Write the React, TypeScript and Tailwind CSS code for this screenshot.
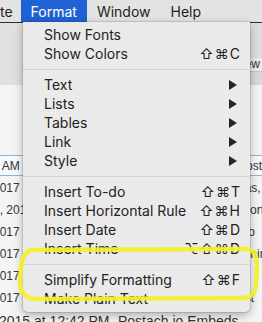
type Item =
  | { kind: "sep" }
  | { kind: "item"; label: string; shortcut?: string; sub?: boolean };

const menuItems: Item[] = [
  { kind: "item", label: "Show Fonts" },
  { kind: "item", label: "Show Colors", shortcut: "⇧⌘C" },
  { kind: "sep" },
  { kind: "item", label: "Text", sub: true },
  { kind: "item", label: "Lists", sub: true },
  { kind: "item", label: "Tables", sub: true },
  { kind: "item", label: "Link", sub: true },
  { kind: "item", label: "Style", sub: true },
  { kind: "sep" },
  { kind: "item", label: "Insert To-do", shortcut: "⇧⌘T" },
  { kind: "item", label: "Insert Horizontal Rule", shortcut: "⇧⌘H" },
  { kind: "item", label: "Insert Date", shortcut: "⇧⌘D" },
  { kind: "item", label: "Insert Time", shortcut: "⌥⇧⌘D" },
  { kind: "sep" },
  { kind: "item", label: "Simplify Formatting", shortcut: "⇧⌘F" },
  { kind: "item", label: "Make Plain Text" },
];

const listRows = [
  { date: "2017 at 4:18 PM", dateClass: "ml-[-7px]", title: "Ideas, drafts", titleClass: "ml-[-13px]" },
  { date: "Mar 2, 2017 at 9:02 AM", dateClass: "ml-[-31px]", title: "Report", titleClass: "ml-[-13px]" },
  { date: "2017 at 11:40 AM", dateClass: "ml-[-7px]", title: "Todo", titleClass: "ml-[-12px]" },
  { date: "2017 at 3:27 PM", dateClass: "ml-[-7px]", title: "Things", titleClass: "ml-[2px]" },
  { date: "2017 at 8:15 AM", dateClass: "ml-[-7px]", title: "", titleClass: "" },
  { date: "2017 at 5:51 PM", dateClass: "ml-[-7px]", title: "Test", titleClass: "ml-[-9px]" },
];

function Arrow() {
  return (
    <svg width="8" height="10" viewBox="0 0 8 10" className="mr-[4px]">
      <polygon points="0,0 8,5 0,10" fill="#262626" />
    </svg>
  );
}

function FormatMenu() {
  return (
    <div className="absolute left-[23px] top-[22px] w-[227px] h-[290px] bg-[#eaeaea] rounded-b-[5px] shadow-[0_3px_10px_rgba(0,0,0,0.3),0_0_0_1px_rgba(0,0,0,0.1)] pt-[3px] font-['Inter','DejaVu_Sans',sans-serif] text-[14px] text-[#222]">
      {menuItems.map((it, i) =>
        it.kind === "sep" ? (
          <div key={i} className="h-[12px] flex items-center">
            <div className="h-px w-full bg-[#d3d3d3]" />
          </div>
        ) : (
          <div key={i} className="h-[19px] flex items-center justify-between pl-[21px] pr-[9px]">
            <span className="leading-[19px]">{it.label}</span>
            {it.shortcut && <span className="leading-[19px] tracking-[1px]">{it.shortcut}</span>}
            {it.sub && <Arrow />}
          </div>
        )
      )}
    </div>
  );
}

function Highlight() {
  return (
    <svg className="absolute left-0 top-0 pointer-events-none" width="262" height="322">
      <path
        d="M 34 250 L 246 249 C 254 249 257 256 257 266 L 256 284 C 256 293 251 298 243 298 L 36 299 C 26 299 20 292 20 282 L 21 268 C 22 257 26 250 34 250 Z"
        fill="none"
        stroke="#f3ef2a"
        strokeWidth="4.5"
        opacity="0.92"
      />
    </svg>
  );
}

export default function App() {
  return (
    <div className="relative w-[262px] h-[322px] overflow-hidden bg-[#f4f4f4] font-['Liberation_Sans',Arial,sans-serif] text-[12px] text-[#333]">
      {/* menu bar */}
      <div className="h-[23px] flex items-center bg-[#e3e3e3] border-b border-[#2e2e2e] font-['Inter','DejaVu_Sans',sans-serif] text-[14px] text-[#1e1e1e]">
        <span className="ml-[-19px] pr-[8px]">Note</span>
        <span className="h-[22px] px-[10px] flex items-center bg-[#1f62d3] text-white">Format</span>
        <span className="px-[10px]">Window</span>
        <span className="px-[10px]">Help</span>
      </div>

      {/* toolbar area */}
      <div className="flex h-[62px]">
        <div className="w-[131px] bg-[#e0e0e0]" />
        <div className="flex-1 flex flex-col">
          <div className="h-[35px] bg-[#dedede]" />
          <div className="h-[13px] bg-[#ececec] flex justify-end pr-[2px] leading-[13px]">Overview</div>
          <div className="h-px bg-[#c6c6c6]" />
          <div className="h-[13px] bg-[#d9d9d9]" />
        </div>
      </div>
      <div className="h-[70px]" />

      {/* note list */}
      <div className="h-[21px] flex items-center border-y border-[#8db4e8] bg-[#f7f9fc]">
        <div className="w-[241px] overflow-hidden whitespace-nowrap">
          <span className="ml-[-31px] inline-block">10:05 AM</span>
        </div>
        <div className="flex-1 whitespace-nowrap">Post</div>
      </div>
      <div className="h-px" />
      {listRows.map((r, i) => (
        <div key={i} className="h-[22px] flex items-center">
          <div className="w-[241px] overflow-hidden whitespace-nowrap">
            <span className={`inline-block ${r.dateClass}`}>{r.date}</span>
          </div>
          <div className="flex-1 overflow-hidden whitespace-nowrap">
            <span className={`inline-block ${r.titleClass}`}>{r.title}</span>
          </div>
        </div>
      ))}
      <div className="h-[22px] pt-[3px] flex items-center whitespace-nowrap text-[14px]">
        <span className="ml-[-1px] w-[119px] shrink-0">2015 at 12:42 PM</span>
        <span>Postach.io Embeds</span>
      </div>

      <FormatMenu />
      <Highlight />
    </div>
  );
}
